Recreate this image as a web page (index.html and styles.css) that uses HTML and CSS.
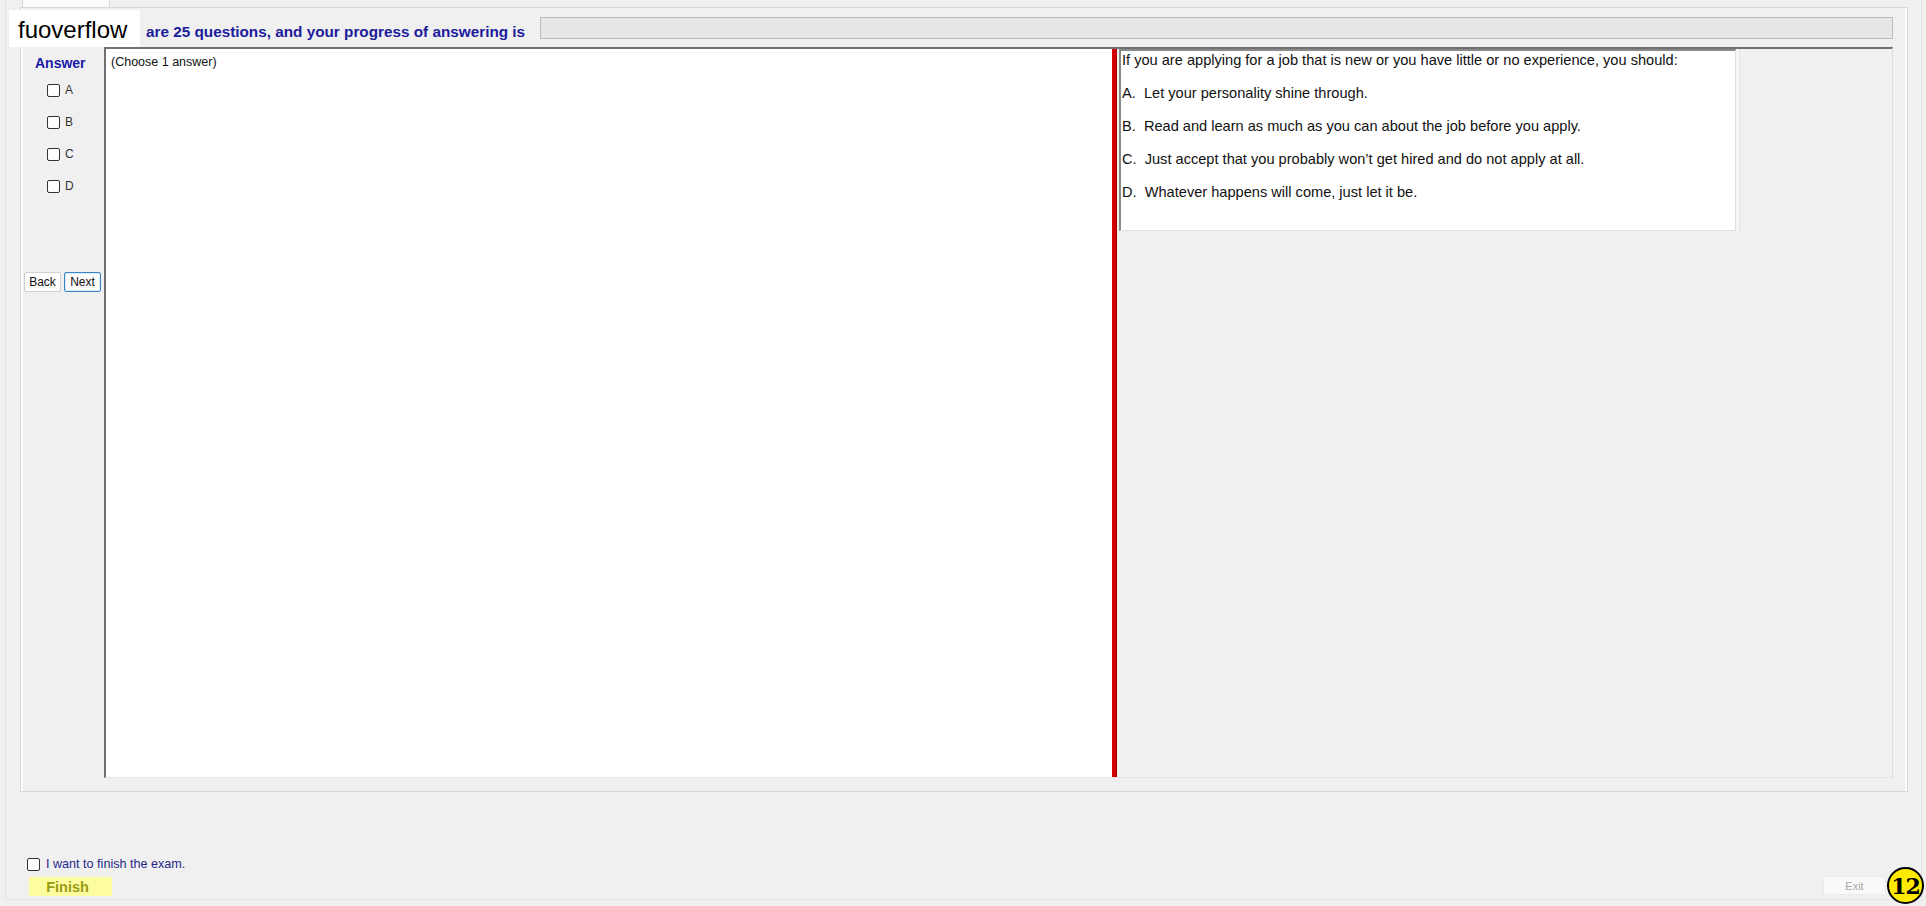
FILE: index.html
```html
<!DOCTYPE html>
<html>
<head>
<meta charset="utf-8">
<link rel="stylesheet" href="styles.css">
</head>
<body>
<div class="app">
  <div class="tabs"><div class="tab"></div></div>
  <div class="page">
    <div class="header">
      <span class="count">are 25 questions, and your progress of answering is</span>
      <div class="progress"></div>
    </div>
    <div class="content">
      <div class="answers">
        <div class="answers-title">Answer</div>
        <div class="opt"><span class="cb"></span><span class="opt-label">A</span></div>
        <div class="opt"><span class="cb"></span><span class="opt-label">B</span></div>
        <div class="opt"><span class="cb"></span><span class="opt-label">C</span></div>
        <div class="opt"><span class="cb"></span><span class="opt-label">D</span></div>
        <div class="nav">
          <button class="btn">Back</button>
          <button class="btn btn-focus">Next</button>
        </div>
      </div>
      <div class="split">
        <div class="pane-left"><p class="hint">(Choose 1 answer)</p></div>
        <div class="splitter"></div>
        <div class="pane-right">
          <div class="question">
            <p>If you are applying for a job that is new or you have little or no experience, you should:</p>
            <p>A.&nbsp; Let your personality shine through.</p>
            <p>B.&nbsp; Read and learn as much as you can about the job before you apply.</p>
            <p>C.&nbsp; Just accept that you probably won’t get hired and do not apply at all.</p>
            <p>D.&nbsp; Whatever happens will come, just let it be.</p>
          </div>
        </div>
      </div>
    </div>
  </div>
  <div class="footer">
    <div class="footer-left">
      <div class="finish-check"><span class="cb"></span><span class="finish-label">I want to finish the exam.</span></div>
      <button class="finish">Finish</button>
    </div>
    <button class="exit">Exit</button>
  </div>
</div>
<div class="watermark">fuoverflow</div>
<div class="badge">12</div>
</body>
</html>
```
FILE: styles.css
```css
* { box-sizing: border-box; }
html, body { margin: 0; padding: 0; }
body {
  background: #f0f0f0;
  font-family: "Liberation Sans", Arial, sans-serif;
  width: 1926px;
  height: 906px;
  overflow: hidden;
}
.app {
  margin-left: 5px;
  width: 1917px;
  height: 900px;
  border-left: 1px solid #e2e2e2;
  border-right: 1px solid #e2e2e2;
  border-bottom: 1px solid #e6e6e6;
}
.tabs {
  height: 7px;
  padding-left: 16px;
}
.tab {
  width: 88px;
  height: 7px;
  background: #fbfbfb;
  border: 1px solid #dadada;
  border-top: none;
  border-bottom: none;
}
.page {
  margin-left: 14px;
  width: 1888px;
  height: 785px;
  border: 1px solid #d8d8d8;
  box-shadow: inset 2px 0 0 #fcfcfc, inset -2px 0 0 #fcfcfc;
  padding-right: 14px;
}
.header {
  height: 39px;
  display: flex;
  align-items: flex-start;
  padding-left: 125px;
}
.count {
  margin-top: 16px;
  font-size: 15.3px;
  line-height: 16px;
  font-weight: bold;
  color: #1c1c9c;
  white-space: nowrap;
}
.progress {
  margin-left: auto;
  margin-top: 9px;
  width: 1353px;
  height: 22px;
  background: #e6e6e6;
  border: 1px solid #bcbcbc;
}
.content {
  display: flex;
  height: 731px;
}
.answers {
  width: 83px;
  flex: none;
}
.answers-title {
  padding-top: 8px;
  padding-left: 14px;
  font-size: 14px;
  line-height: 16px;
  font-weight: bold;
  color: #1a1aa8;
  margin-bottom: 13px;
}
.opt {
  height: 32px;
  display: flex;
  align-items: flex-start;
  padding-left: 26px;
}
.cb {
  display: inline-block;
  width: 13px;
  height: 13px;
  background: #fff;
  border: 1px solid #333;
  border-radius: 2px;
  flex: none;
}
.opt-label {
  margin-left: 5px;
  font-size: 12px;
  line-height: 13px;
  color: #333;
}
.nav {
  margin-top: 60px;
  padding-left: 3px;
  display: flex;
  gap: 3px;
}
.btn {
  width: 37px;
  height: 20px;
  padding: 0;
  font-family: "Liberation Sans", Arial, sans-serif;
  font-size: 12px;
  color: #111;
  background: #fdfdfd;
  border: 1px solid #d0d0d0;
  border-radius: 2px;
}
.btn-focus {
  border: 1px solid #3d86c6;
  box-shadow: inset 0 0 0 1px #d8eaf8;
}
.split {
  width: 1789px;
  height: 731px;
  display: flex;
  border-top: 2px solid #707070;
  border-left: 2px solid #707070;
  border-right: 1px solid #dcdcdc;
  border-bottom: 1px solid #e4e4e4;
}
.pane-left {
  width: 1006px;
  background: #fff;
  padding: 6px 5px;
}
.hint {
  margin: 0;
  font-size: 12.5px;
  line-height: 14px;
  color: #111;
}
.splitter {
  width: 5px;
  background: #d40000;
  border-right: 1px solid #a80000;
}
.pane-right {
  flex: 1;
  padding-left: 2px;
}
.question {
  width: 617px;
  height: 182px;
  background: #fff;
  border-top: 2px solid #8a8a8a;
  border-left: 2px solid #8a8a8a;
  border-right: 1px solid #e0e0e0;
  border-bottom: 1px solid #e0e0e0;
  padding-left: 1px;
  padding-top: 1px;
  box-shadow: 3px 0 0 #f7f7f7, 4px 0 0 #e4e4e4;
}
.question p {
  margin: 0 0 17px 0;
  font-size: 14.6px;
  line-height: 16px;
  color: #111;
  white-space: nowrap;
}
.footer {
  height: 107px;
  display: flex;
  justify-content: space-between;
  align-items: flex-end;
  padding: 0 35px 3px 21px;
}
.footer-left {
  display: flex;
  flex-direction: column;
  align-items: flex-start;
}
.finish-check {
  display: flex;
  align-items: center;
  height: 16px;
  margin-top: 1px;
}
.finish-label {
  margin-left: 6px;
  font-size: 12.6px;
  color: #26268a;
}
.finish {
  margin-top: 5px;
  margin-left: 2px;
  width: 83px;
  height: 19px;
  padding: 0 6px 0 0;
  background: #fdfda0;
  border: none;
  font-family: "Liberation Sans", Arial, sans-serif;
  font-size: 14.5px;
  font-weight: bold;
  color: #9a9a10;
}
.exit {
  width: 63px;
  height: 19px;
  padding: 0;
  margin-bottom: 1px;
  background: #f9f9f9;
  border: 1px solid #ebebeb;
  font-family: "Liberation Sans", Arial, sans-serif;
  font-size: 11px;
  color: #a8a8a8;
}
.watermark {
  position: absolute;
  left: 9px;
  top: 10px;
  width: 131px;
  height: 37px;
  background: #fff;
  padding-left: 9px;
  font-size: 24px;
  line-height: 40px;
  color: #000;
  overflow: hidden;
}
.badge {
  position: absolute;
  left: 1887px;
  top: 867px;
  width: 37px;
  height: 37px;
  border-radius: 50%;
  background: #ffea00;
  border: 2px solid #000;
  display: flex;
  align-items: center;
  justify-content: center;
  font-family: "DejaVu Serif", serif;
  font-weight: bold;
  font-size: 22px;
  letter-spacing: -1px;
  color: #000;
}
```
